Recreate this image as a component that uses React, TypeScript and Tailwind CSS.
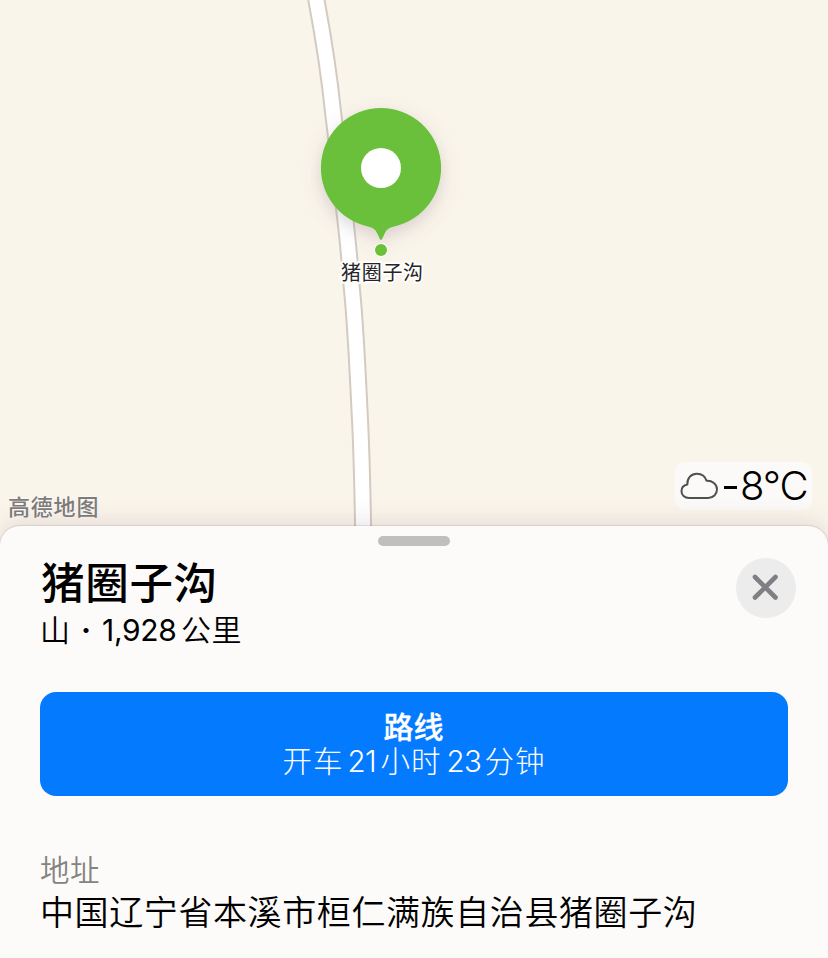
const road =
  'M316 -2 C324 40 330 82 333.500 116 C338 152 341 180 344 208 C348 240 350 265 352 290 C356 330 358 380 360 420 C361.500 450 362.500 485 363.500 550';

function MapArea() {
  return (
    <div className="relative h-[526px] w-full shrink-0 bg-[#faf5eb]">
      <svg className="absolute left-0 top-0" width="828" height="550" viewBox="0 0 828 550" fill="none">
        <path d={road} stroke="#d3cbc2" strokeWidth="18" />
        <path d={road} stroke="#ffffff" strokeWidth="14" />
      </svg>
      <svg className="absolute left-[281px] top-[80px]" width="200" height="200" viewBox="281 80 200 200">
        <defs>
          <filter id="pinShadow" x="-30%" y="-30%" width="160%" height="170%">
            <feDropShadow dx="0" dy="6" stdDeviation="9" floodColor="#74606a" floodOpacity="0.26" />
          </filter>
        </defs>
        <path
          filter="url(#pinShadow)"
          fill="#6bc03a"
          d="M381 108a60 60 0 0 1 13 118.600c-7 1.600-8.500 5-10 8.400l-2 4.200q-1 1.600-2 0l-2-4.200c-1.500-3.400-3-6.800-10-8.400A60 60 0 0 1 381 108Z"
        />
        <circle cx="381" cy="168" r="20" fill="#fff" />
        <circle cx="381" cy="250" r="7" fill="#fdfaf4" />
        <circle cx="381" cy="250" r="6" fill="#6bc03a" />
      </svg>
      <div className="absolute left-[341px] top-[258px] whitespace-nowrap text-[20px] leading-[30px] tracking-[0.7px] text-[#25252b] [paint-order:stroke_fill] [-webkit-text-stroke:4px_#fffdf9]">
        猪圈子沟
      </div>
      <div className="absolute left-[8px] top-[492px] whitespace-nowrap text-[22px] font-medium leading-[30px] tracking-[0.8px] text-[#7d7c7a] [paint-order:stroke_fill] [-webkit-text-stroke:2px_#fbf8f2]">
        高德地图
      </div>
      <div className="absolute left-[675px] top-[462px] flex h-12 w-[137px] items-center rounded-[10px] bg-[#fbfaf8]">
        <svg className="ml-[5px] shrink-0" width="39" height="28" viewBox="0 0 39 28" fill="none">
          <path
            d="M9 26C4.600 26 1.500 23.100 1.500 19.200c0-3.500 2.500-6.100 5.800-6.700C7 6 11.300 1.700 17 1.700c4.600 0 8.200 2.900 9.500 7.100 5.700-.4 10.500 3.200 10.500 8.500 0 5.100-3.800 8.700-8.800 8.700Z"
            stroke="#505050"
            strokeWidth="2"
            strokeLinejoin="round"
          />
        </svg>
        <span className="mt-[3px] ml-[5px] h-[3px] w-[13px] bg-black" />
        <span className="ml-[3px] h-[48px] whitespace-nowrap text-[40px] font-light leading-[48px] tracking-[-1.2px] text-black">8°C</span>
      </div>
    </div>
  );
}

function PlaceSheet() {
  return (
    <section className="relative h-[450px] w-full shrink-0 rounded-t-[20px] bg-[#fcfbf9] px-10 pt-[10px] shadow-[0_0_1px_1px_rgba(110,90,90,0.16),0_-4px_24px_rgba(120,90,110,0.16)]">
      <div className="mx-auto h-[10px] w-[72px] rounded-full bg-[#bfbfbf]" />
      <header className="-mr-2 flex justify-between pt-3">
        <div>
          <h1 className="ml-px h-[50px] whitespace-nowrap text-[43.500px] font-medium leading-[50px] tracking-[0.700px] text-black">猪圈子沟</h1>
          <p className="mt-px flex h-[41px] whitespace-nowrap text-[30px] font-[350] leading-[42px] text-black">
            <span>山</span>
            <span className="w-[32px] text-center font-bold">·</span>
            <span className="w-[78px] font-normal tracking-[-0.3px]">1,928</span>
            <span className="ml-px tracking-[0.6px]">公里</span>
          </p>
        </div>
        <button aria-label="关闭" className="flex h-[60px] w-[60px] items-center justify-center rounded-full bg-[#ececec]">
          <svg width="30" height="30" viewBox="0 0 30 30" stroke="#7f7f84" strokeWidth="4.600" strokeLinecap="round">
            <path d="M4 4 24.500 24.500M24.500 4 4 24.500" />
          </svg>
        </button>
      </header>
      <button className="mt-[42px] flex h-[104px] w-full flex-col items-center rounded-2xl bg-[#047aff] pt-[18px] text-white">
        <span className="-ml-px text-[30px] font-medium leading-[35px] [-webkit-text-stroke:0.3px_#fff]">路线</span>
        <span className="flex whitespace-nowrap text-[29.500px] font-light leading-[33px]">
          <span className="w-[65px] text-left tracking-[1px]">开车</span>
          <span className="w-[33px] text-left tracking-[-0.500px]">21</span>
          <span className="w-[66px] text-left tracking-[1px]">小时</span>
          <span className="w-[38px] text-left tracking-[-0.500px]">23</span>
          <span className="tracking-[1px]">分钟</span>
        </span>
      </button>
      <div className="mt-[54px] whitespace-nowrap">
        <div className="text-[29.500px] font-[350] leading-[40px] tracking-[0.5px] text-[#85827f]">地址</div>
        <div className="text-[34px] font-[350] leading-[46px] tracking-[0.600px] text-black">中国辽宁省本溪市桓仁满族自治县猪圈子沟</div>
      </div>
    </section>
  );
}

export default function App() {
  return (
    <main className="flex h-[958px] w-[828px] flex-col overflow-hidden bg-[#faf5eb] font-['Inter','Noto_Sans_CJK_SC',sans-serif]">
      <MapArea />
      <PlaceSheet />
    </main>
  );
}
